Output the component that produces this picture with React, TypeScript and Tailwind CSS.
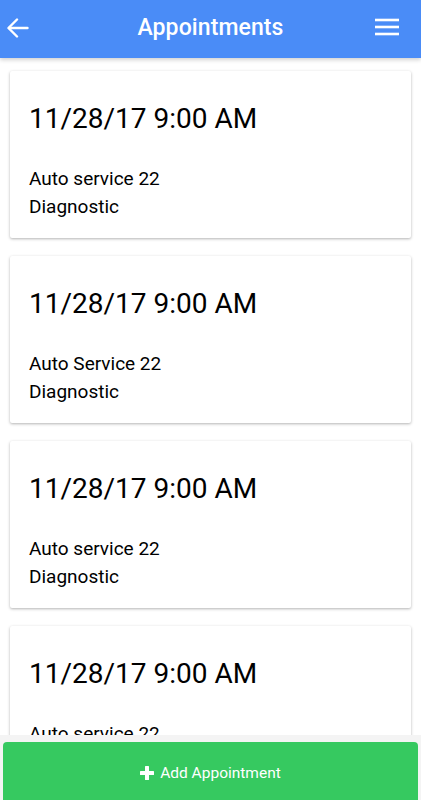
const appointments = [
  { id: 1, date: '11/28/17 9:00 AM', shop: 'Auto service 22', service: 'Diagnostic' },
  { id: 2, date: '11/28/17 9:00 AM', shop: 'Auto Service 22', service: 'Diagnostic' },
  { id: 3, date: '11/28/17 9:00 AM', shop: 'Auto service 22', service: 'Diagnostic' },
  { id: 4, date: '11/28/17 9:00 AM', shop: 'Auto service 22', service: 'Diagnostic' },
];

export default function App() {
  return (
    <div className="h-[800px] w-full flex flex-col bg-white overflow-hidden" style={{ fontFamily: 'Roboto, "Noto Sans", sans-serif' }}>
      {/* Header */}
      <header className="relative z-10 h-[58px] shrink-0 bg-[#4a8cf7] grid grid-cols-[60px_1fr_60px] items-center shadow-[0_2px_4px_rgba(0,0,0,0.18)]">
        <button className="ml-[7px] w-[22px] h-[22px] -mt-[2px] flex items-center justify-center text-white">
          <svg width="22" height="20" viewBox="0 0 22 20" fill="none" stroke="currentColor" strokeWidth="2.4" strokeLinecap="round" strokeLinejoin="round">
            <path d="M20.5 10H2" />
            <path d="M10 1.5L1.5 10L10 18.5" />
          </svg>
        </button>
        <h1 className="text-center text-white text-[23px] leading-[30px] -mt-[3px] font-medium tracking-[0.1px]">Appointments</h1>
        <button className="justify-self-end mr-[22px] w-[24px] h-[20px] -mt-[4px] flex items-center justify-center text-white">
          <svg width="24" height="18" viewBox="0 0 24 18" fill="none" stroke="currentColor" strokeWidth="2.6">
            <path d="M0 2H24" />
            <path d="M0 9H24" />
            <path d="M0 16H24" />
          </svg>
        </button>
      </header>

      {/* List */}
      <main className="flex-1 overflow-hidden px-[10px] pt-[13px] flex flex-col gap-[18px]">
        {appointments.map((a) => (
          <div key={a.id} className="shrink-0 bg-white rounded-[2px] shadow-[0_1px_3px_rgba(0,0,0,0.3)] px-[19px] pt-[28px] pb-[17px]">
            <p className="text-[28px] leading-[40px] text-black">{a.date}</p>
            <p className="mt-[26px] text-[19px] leading-[28px] text-black">{a.shop}</p>
            <p className="text-[19px] leading-[28px] text-black">{a.service}</p>
          </div>
        ))}
      </main>

      {/* Footer */}
      <footer className="shrink-0 h-[65px] bg-[#f4f4f4] pt-[7px] px-[3px]">
        <button className="w-full h-[62px] rounded-[4px] bg-[#36c960] flex items-start justify-center pt-[19px] gap-[6px] text-white">
          <svg width="14" height="14" viewBox="0 0 14 14" className="mt-[5px]" fill="currentColor">
            <rect x="5" y="0" width="4" height="14" rx="0.5" />
            <rect x="0" y="5" width="14" height="4" rx="0.5" />
          </svg>
          <span className="text-[15.5px] leading-[24px]">Add Appointment</span>
        </button>
      </footer>
    </div>
  );
}
